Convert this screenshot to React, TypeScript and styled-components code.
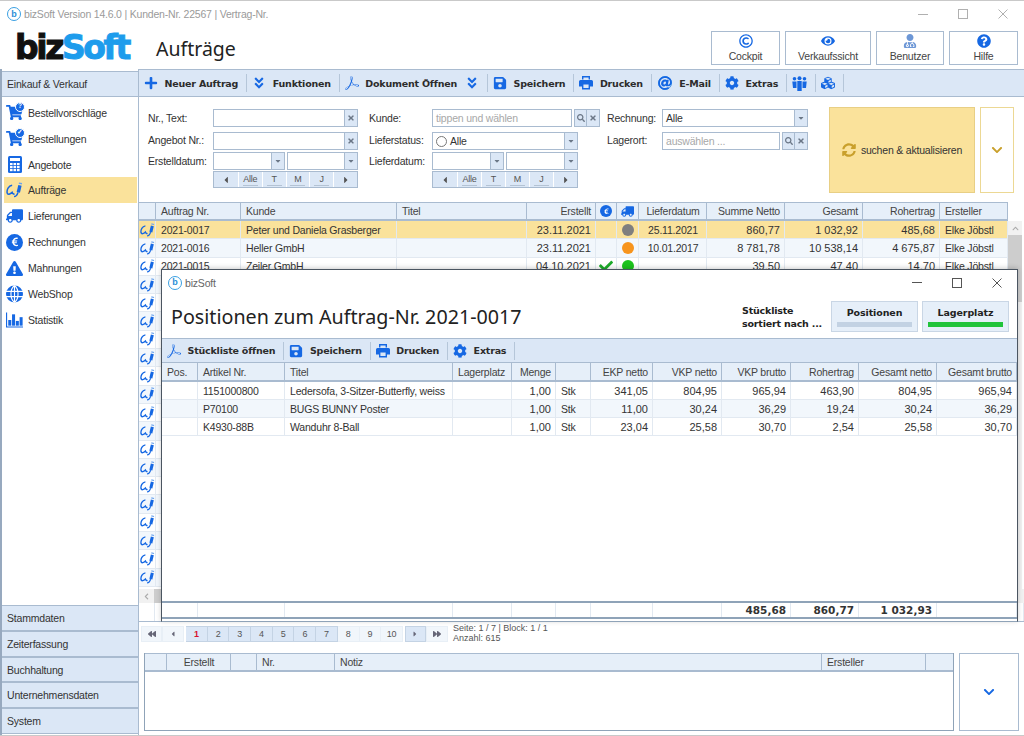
import { FC, ReactNode } from "react";
import styled, { createGlobalStyle } from "styled-components";
import {
	FaPlus, FaAngleDoubleDown, FaSave, FaCog, FaCubes, FaRegCopyright, FaEye, FaUserMd,
	FaQuestionCircle, FaShoppingCart, FaTruck, FaEuroSign, FaExclamationTriangle,
	FaSyncAlt, FaChevronDown, FaSearch, FaCheck, FaCaretLeft, FaCaretRight, FaCaretDown, FaTimes,
	FaBackward, FaForward, FaChevronUp, FaChevronLeft, FaAt
} from "react-icons/fa";
import { SiAdobeacrobatreader } from "react-icons/si";

const BLUE = "#1668e3";
const LINE = "#a9bbd0";
const PANEL = "#dbe7f6";
const HEAD = "#e6eff9";
const YELLOW = "#fae29b";
const TEXT = "#333";
const BOLD_FONT = '"DejaVu Sans", sans-serif';

const GlobalStyle = createGlobalStyle`
	html, body {
		margin: 0;
		padding: 0;
		background: #fff;
	}
	body {
		font-family: "Liberation Sans", "Noto Sans", sans-serif;
		font-size: 10.5px;
		letter-spacing: -0.2px;
		color: ${TEXT};
	}
	* {
		box-sizing: border-box;
	}
`;

const Page = styled.div`
	position: relative;
	display: flex;
	flex-direction: column;
	width: 1024px;
	height: 736px;
	overflow: hidden;
	background: #fff;
	border-top: 1px solid #c9c9c9;
	border-bottom: 1px solid #c9c9c9;
`;

const TitleBar = styled.div`
	display: flex;
	align-items: center;
	height: 26px;
	flex: none;
	padding-left: 7px;
	column-gap: 3px;
	color: #9a9a9a;
`;

const TitleText = styled.span`
	flex: 1;
`;

const AppMark = styled.span`
	display: inline-flex;
	align-items: center;
	justify-content: center;
	width: 14px;
	height: 14px;
	border: 1.5px solid #3a9fe2;
	border-radius: 50%;
	color: #2b8fd8;
	font-size: 9px;
	font-weight: 700;
	line-height: 1;
`;

const WindowButtons = styled.div<{ $tone?: "dim" | "dark" }>`
	display: flex;
	align-items: center;
	column-gap: 30px;
	padding-right: ${p => (p.$tone === "dark" ? 15 : 16)}px;
	span {
		border-color: ${p => (p.$tone === "dark" ? "#555" : "#b0b0b0")};
	}
`;

const Minimize = styled.span`
	display: block;
	width: 10px;
	border-top: 1px solid;
`;

const Maximize = styled.span`
	display: block;
	width: 10px;
	height: 10px;
	border: 1px solid;
`;

const CloseX: FC<{ color?: string }> = ({ color = "#b0b0b0" }) => (
	<svg width="10" height="10" viewBox="0 0 10 10">
		<path d="M0.5 0.5 L9.5 9.5 M9.5 0.5 L0.5 9.5" stroke={color} strokeWidth="1" fill="none" />
	</svg>
);

const Header = styled.div`
	display: flex;
	align-items: center;
	flex: none;
	height: 42px;
	padding: 4px 6px 4px 15px;
`;

const Logo = styled.div`
	width: 141px;
	font-family: ${BOLD_FONT};
	font-size: 33px;
	font-weight: 700;
	letter-spacing: -2.4px;
	line-height: 34px;
	color: #111;
	-webkit-text-stroke: 1px currentColor;
`;

const LogoSoft = styled.span`
	color: #1d9cec;
`;

const PageTitle = styled.h1`
	flex: 1;
	margin: 0;
	font-family: "Noto Sans", sans-serif;
	font-size: 19.5px;
	font-weight: 400;
	letter-spacing: 0;
	color: #222;
`;

const TopButtons = styled.div`
	display: flex;
	column-gap: 5px;
`;

const TopButton = styled.button<{ $w: number }>`
	display: flex;
	flex-direction: column;
	align-items: center;
	justify-content: center;
	row-gap: 2px;
	width: ${p => p.$w}px;
	height: 34px;
	padding: 0;
	background: #fff;
	border: 1px solid ${LINE};
	color: #444;
	font-family: inherit;
	font-size: inherit;
	letter-spacing: inherit;
	line-height: 12px;
	svg {
		color: ${BLUE};
		font-size: 14px;
	}
`;

const UserIcon = styled(FaUserMd)`
	&& {
		color: #6d97d6;
	}
`;

const Body = styled.div`
	display: flex;
	flex: 1;
	min-height: 0;
`;

const Sidebar = styled.nav`
	display: flex;
	flex-direction: column;
	flex: none;
	width: 139px;
	padding: 2px 0 1px;
	border-left: 2px solid #97a9bf;
	border-right: 1px solid ${LINE};
`;

const SectionTab = styled.div`
	display: flex;
	align-items: center;
	flex: none;
	height: 25.8px;
	padding-left: 5px;
	background: ${PANEL};
	border-top: 1px solid ${LINE};
	border-bottom: 1px solid ${LINE};
	color: #333;
`;

const NavList = styled.div`
	display: flex;
	flex-direction: column;
	flex: 1;
	padding: 3px 1px 0 2px;
`;

const NavItem = styled.div<{ $active?: boolean }>`
	display: flex;
	align-items: center;
	height: 25.9px;
	column-gap: 5px;
	padding-left: 2px;
	background: ${p => (p.$active ? YELLOW : "transparent")};
	color: #333;
`;

const NavIcon = styled.span`
	position: relative;
	display: flex;
	align-items: center;
	justify-content: center;
	flex: none;
	width: 17px;
	height: 18px;
	color: ${BLUE};
	font-size: 17px;
`;

const CartBadge = styled.span`
	position: absolute;
	top: -2px;
	right: -2px;
	display: flex;
	align-items: center;
	justify-content: center;
	width: 10px;
	height: 10px;
	border-radius: 50%;
	background: ${BLUE};
	border: 1px solid #fff;
	color: #fff;
	font-size: 6.5px;
	font-weight: 700;
	line-height: 1;
`;

const Disc = styled.span<{ $size?: number }>`
	display: flex;
	align-items: center;
	justify-content: center;
	width: ${p => p.$size ?? 17}px;
	height: ${p => p.$size ?? 17}px;
	border-radius: 50%;
	background: ${BLUE};
	color: #fff;
	font-size: ${p => ((p.$size ?? 17) * 0.58)}px;
`;

const AtRing = styled.span`
	display: flex;
	align-items: center;
	justify-content: center;
	flex: none;
	width: 14px;
	height: 14px;
	margin: 0 1px;
	border: 1.5px solid #3b8fe8;
	border-radius: 50%;
	svg {
		color: #3b8fe8;
		font-size: 8px;
	}
`;

const Main = styled.main`
	display: flex;
	flex-direction: column;
	flex: 1;
	min-width: 0;
`;

const Toolbar = styled.div<{ $h: number }>`
	display: flex;
	align-items: center;
	flex: none;
	height: ${p => p.$h}px;
	padding-left: 5px;
	background: ${PANEL};
	border-top: 1px solid ${LINE};
	border-bottom: 1px solid ${LINE};
`;

const Tool = styled.div`
	display: flex;
	align-items: center;
	column-gap: 6.5px;
	height: 100%;
	padding-right: 8px;
	font-family: ${BOLD_FONT};
	font-size: 9.5px;
	font-weight: 700;
	letter-spacing: -0.2px;
	white-space: nowrap;
	color: #2c2c2c;
	svg {
		flex: none;
		color: ${BLUE};
		font-size: 14px;
	}
`;

const ToolSep = styled.span`
	flex: none;
	width: 1px;
	height: 18px;
	margin-right: 5px;
	background: #b5c6d9;
`;

const FilterPanel = styled.section`
	display: flex;
	flex: none;
	height: 105px;
	padding: 10px 9px 0 9px;
`;

const FieldGroup = styled.div<{ $label: number; $w: number; $gap: number }>`
	display: grid;
	grid-template-columns: ${p => p.$label}px ${p => p.$w}px;
	grid-auto-rows: min-content;
	row-gap: 2px;
	align-items: center;
	margin-right: ${p => p.$gap}px;
	padding-top: 2px;
`;

const Label = styled.span`
	grid-column: 1;
	color: #333;
`;

const FieldRow = styled.div<{ $w?: number; $top?: number }>`
	grid-column: 2;
	display: flex;
	column-gap: 2px;
	width: ${p => (p.$w ? `${p.$w}px` : "auto")};
	height: 18px;
	margin-top: ${p => p.$top ?? 0}px;
`;

const Input = styled.div<{ $ghost?: boolean }>`
	display: flex;
	align-items: center;
	flex: 1;
	min-width: 0;
	padding-left: 3px;
	column-gap: 3px;
	background: #fff;
	border: 1px solid ${LINE};
	color: ${p => (p.$ghost ? "#a8a8a8" : TEXT)};
`;

const Joined = styled.div<{ $fixed?: boolean }>`
	display: flex;
	flex: ${p => (p.$fixed ? "none" : "1")};
	min-width: 0;
`;

const SquareButton = styled.span<{ $first?: boolean }>`
	display: flex;
	align-items: center;
	justify-content: center;
	flex: none;
	width: 13px;
	background: ${PANEL};
	border: 1px solid ${LINE};
	border-left: ${p => (p.$first ? `1px solid ${LINE}` : "none")};
	color: #6b7787;
	font-size: 8px;
`;

const Radio = styled.span`
	width: 11px;
	height: 11px;
	border: 1px solid #777;
	border-radius: 50%;
`;

const DateNav = styled.div<{ $w?: number }>`
	grid-column: 2;
	display: grid;
	grid-template-columns: repeat(6, 1fr);
	width: ${p => (p.$w ? `${p.$w}px` : "auto")};
	height: 17px;
	margin-top: -1px;
	background: ${PANEL};
	border: 1px solid ${LINE};
`;

const DateNavCell = styled.span`
	display: flex;
	flex-direction: column;
	align-items: center;
	justify-content: center;
	border-left: 1px solid #fff;
	color: #555;
	font-size: 9px;
	line-height: 10px;
	&:first-child {
		border-left: none;
	}
	svg {
		font-size: 10px;
		color: #555;
	}
`;

const NavUnderline = styled.span`
	width: 15px;
	height: 1px;
	margin-top: 1px;
	background: #b4c3d4;
`;

const SearchButton = styled.div`
	display: flex;
	align-items: center;
	justify-content: center;
	column-gap: 5px;
	flex: none;
	width: 146px;
	height: 86px;
	background: ${YELLOW};
	border: 1px solid #e8cf85;
	color: #333;
	svg {
		color: #c9a02c;
		font-size: 14px;
	}
`;

const ExpandButton = styled.div<{ $tone: "gold" | "blue" }>`
	display: flex;
	align-items: center;
	justify-content: center;
	flex: none;
	background: #fff;
	border: 1px solid ${p => (p.$tone === "gold" ? "#ecd894" : LINE)};
	color: ${p => (p.$tone === "gold" ? "#c9a02c" : BLUE)};
	font-size: 12px;
`;

const GoldExpand = styled(ExpandButton)`
	width: 34px;
	height: 86px;
	margin-left: 5px;
`;

const BlueExpand = styled(ExpandButton)`
	width: 60px;
	height: 78px;
	margin-left: 5px;
`;

const OrderGrid = styled.section`
	display: flex;
	flex-direction: column;
	flex: none;
	height: 420px;
	border-bottom: 1px solid ${LINE};
`;

const GridMiddle = styled.div`
	display: flex;
	flex: 1;
	min-height: 0;
`;

const GridColumn = styled.div`
	display: flex;
	flex-direction: column;
	width: 869px;
	flex: none;
	overflow: hidden;
`;

const Row = styled.div<{ $cols: string; $tone?: "sel" | "alt" | "plain"; $h?: number }>`
	display: grid;
	grid-template-columns: ${p => p.$cols};
	flex: none;
	height: ${p => p.$h ?? 18}px;
	background: ${p => (p.$tone === "sel" ? YELLOW : p.$tone === "alt" ? "#f2f7fc" : "#fff")};
	border-bottom: 1px solid #e2e9f1;
`;

const HeadRow = styled(Row)<{ $noTop?: boolean }>`
	background: ${HEAD};
	border-top: ${p => (p.$noTop ? "none" : `1px solid ${LINE}`)};
	border-bottom: 2px solid ${LINE};
`;

const FootRow = styled(Row)`
	margin-bottom: 2px;
	border-top: 2px solid #8fa3b8;
	border-bottom: 2px solid #8fa3b8;
`;

const Cell = styled.div<{ $right?: boolean; $center?: boolean; $bold?: boolean; $head?: boolean; $flush?: boolean; $noLine?: boolean }>`
	display: flex;
	align-items: center;
	justify-content: ${p => (p.$right ? "flex-end" : p.$center ? "center" : "flex-start")};
	min-width: 0;
	padding: ${p => (p.$flush ? "0" : "0 4px 0 5px")};
	border-right: ${p => (p.$noLine ? "none" : `1px solid ${p.$head ? LINE : "#e2e9f1"}`)};
	color: ${p => (p.$head ? "#444" : TEXT)};
	font-family: ${p => (p.$bold ? BOLD_FONT : "inherit")};
	font-size: ${p => (p.$right && !p.$head && !p.$bold ? "11px" : "inherit")};
	font-weight: ${p => (p.$bold ? 700 : 400)};
	letter-spacing: ${p => (p.$right && !p.$head ? "0" : "inherit")};
	white-space: nowrap;
	overflow: hidden;
`;

const CheckMark = styled(FaCheck)`
	color: #1dab2a;
	font-size: 14px;
`;

const TruckIcon = styled(FaTruck)<{ $size: number }>`
	color: ${BLUE};
	font-size: ${p => p.$size}px;
	transform: scaleX(-1);
`;

const Dot = styled.span<{ $c: string }>`
	width: 12px;
	height: 12px;
	border-radius: 50%;
	background: ${p => p.$c};
`;

const VScroll = styled.div`
	display: flex;
	flex-direction: column;
	align-items: center;
	width: 14px;
	margin-top: 19px;
	background: #f1f1f1;
	color: #aaa;
	font-size: 7px;
`;

const ScrollArrow = styled.span`
	display: flex;
	align-items: center;
	justify-content: center;
	width: 100%;
	height: 14px;
	flex: none;
	background: #f1f1f1;
`;

const VThumb = styled.span`
	width: 100%;
	height: 67px;
	background: #cdcdcd;
`;

const HScroll = styled.div`
	display: flex;
	flex: none;
	height: 14px;
	background: #f1f1f1;
	color: #aaa;
	font-size: 7px;
`;

const HArrow = styled.span`
	display: flex;
	align-items: center;
	justify-content: center;
	width: 15px;
`;

const HThumb = styled.span`
	width: 60px;
	background: #cdcdcd;
`;

const SumStrip = styled.div`
	display: grid;
	grid-template-columns: 16px 1fr;
	flex: none;
	height: 18px;
	div {
		border-right: 1px solid #e2e9f1;
	}
`;

const PagerZone = styled.div`
	display: flex;
	align-items: center;
	flex: none;
	height: 31px;
	padding: 0 0 8px 2px;
`;

const PagerGroup = styled.div`
	display: flex;
	margin-right: 2px;
`;

const PageCell = styled.span<{ $on?: boolean; $w?: number; $red?: boolean }>`
	display: flex;
	align-items: center;
	justify-content: center;
	width: ${p => p.$w ?? 21.7}px;
	height: 16px;
	background: ${p => (p.$on ? PANEL : "#f1f6fb")};
	border: 1px solid ${p => (p.$on ? "#c4d3e4" : "#e8eff6")};
	border-left-width: ${p => (p.$w ? 1 : 0)}px;
	color: ${p => (p.$red ? "#d8112f" : "#555")};
	font-size: 9px;
	font-weight: ${p => (p.$red ? 700 : 400)};
	svg {
		font-size: 8px;
		color: #667;
	}
`;

const PagerInfo = styled.div`
	margin-left: 3px;
	color: #555;
	font-size: 9px;
	letter-spacing: 0;
	line-height: 9.5px;
`;

const NotesZone = styled.div`
	display: flex;
	flex: none;
	height: 78px;
	padding-left: 5px;
`;

const NotesGrid = styled.div`
	display: flex;
	flex-direction: column;
	width: 810px;
	border: 1px solid #8fa3b8;
	border-top: none;
`;

const Modal = styled.div`
	position: absolute;
	left: 161px;
	top: 268px;
	display: flex;
	flex-direction: column;
	width: 857px;
	height: 353px;
	background: #fff;
	border: 1px solid #4b5561;
	border-bottom-color: #8fa3b8;
	box-shadow: 0 -1px 5px rgba(0, 0, 0, 0.2);
`;

const ModalBar = styled.div`
	display: flex;
	align-items: center;
	flex: none;
	height: 25px;
	padding-left: 6px;
	column-gap: 3px;
	color: #666;
`;

const ModalHead = styled.div`
	display: flex;
	align-items: center;
	flex: none;
	height: 43px;
	padding: 0 8px 0 9px;
`;

const ModalTitle = styled.h2`
	flex: 1;
	margin: 0;
	font-family: "Noto Sans", sans-serif;
	font-size: 19.7px;
	font-weight: 400;
	letter-spacing: 0;
	color: #222;
	white-space: nowrap;
`;

const SortLabel = styled.div`
	margin-right: 5px;
	font-family: ${BOLD_FONT};
	font-size: 9.5px;
	font-weight: 700;
	letter-spacing: -0.2px;
	line-height: 13px;
	color: #222;
`;

const SortButton = styled.div`
	display: flex;
	flex-direction: column;
	align-items: center;
	justify-content: flex-end;
	row-gap: 4px;
	width: 87px;
	height: 31px;
	margin-left: 4px;
	padding: 0 5px 4px;
	background: ${HEAD};
	border: 1px solid #c9d6e5;
	font-family: ${BOLD_FONT};
	font-size: 9.5px;
	font-weight: 700;
	letter-spacing: -0.1px;
	color: #222;
`;

const SortBar = styled.span<{ $on?: boolean }>`
	width: 100%;
	height: 5px;
	background: ${p => (p.$on ? "#21c43a" : "#c3d2e3")};
`;

const ModalTable = styled.div`
	display: flex;
	flex-direction: column;
	flex: 1;
	min-height: 0;
`;

const Spacer = styled.div`
	flex: 1;
`;

const RowIcon = styled.span`
	display: flex;
	align-items: center;
	justify-content: center;
	width: 100%;
	svg {
		width: 15px;
		height: 14px;
	}
`;

const PenIcon: FC = () => (
	<svg width="18" height="16" viewBox="0 0 18 16" fill="none">
		<path d="M6.5 3 C2.5 3.5 0.7 8 1.2 11 C1.7 13.5 4.5 12.5 6.5 10.5 C7 12 8 12.5 9 12" stroke={BLUE} strokeWidth="1.6" />
		<path d="M13 10.5 L14.8 3" stroke={BLUE} strokeWidth="3.6" />
		<path d="M15.1 1.7 L15.4 0.3" stroke="#6aa3ee" strokeWidth="3.4" />
		<path d="M8.5 15 C11 15 12 13 12.7 10.5" stroke={BLUE} strokeWidth="1.6" />
	</svg>
);

const CalcIcon: FC = () => (
	<svg width="14" height="17" viewBox="0 0 14 17">
		<rect width="14" height="17" rx="1.5" fill={BLUE} />
		<rect x="2" y="2" width="10" height="3" fill="#fff" />
		{[2, 5.5, 9].flatMap(x => [7, 10, 13].map(y => (
			<rect key={`${x}-${y}`} x={x} y={y} width="2.6" height="2.2" fill="#fff" />
		)))}
	</svg>
);

const GlobeIcon: FC = () => (
	<svg width="18" height="18" viewBox="0 0 18 18">
		<circle cx="9" cy="9" r="9" fill={BLUE} />
		<path d="M0 6.2 H18 M0 11.8 H18 M9 0 V18 M9 0 C4 4 4 14 9 18 M9 0 C14 4 14 14 9 18" stroke="#fff" strokeWidth="1.2" fill="none" />
	</svg>
);

const BarsIcon: FC = () => (
	<svg width="18" height="16" viewBox="0 0 18 16" fill={BLUE}>
		<path d="M0 0 H1.2 V14.8 H18 V16 H0 Z" />
		<rect x="2.4" y="8" width="3.2" height="6" />
		<rect x="6.4" y="2" width="3.2" height="12" />
		<rect x="10.4" y="9" width="3.2" height="5" />
		<rect x="14.4" y="5" width="3.2" height="9" />
	</svg>
);

const PrinterIcon: FC = () => (
	<svg width="14" height="14" viewBox="0 0 14 14" fill={BLUE}>
		<path d="M3 0 H11 V3.5 H9.6 V1.4 H4.4 V3.5 H3 Z" />
		<path fillRule="evenodd" d="M1.5 4 H12.5 A1.5 1.5 0 0 1 14 5.5 V10.5 H11 V13.5 H3 V10.5 H0 V5.5 A1.5 1.5 0 0 1 1.5 4 Z M4.4 8.5 V12.1 H9.6 V8.5 Z" />
	</svg>
);

const PeopleIcon: FC = () => (
	<svg width="15" height="15" viewBox="0 0 15 15" fill={BLUE}>
		<circle cx="2.5" cy="2.8" r="1.8" />
		<circle cx="7.5" cy="2.2" r="2" />
		<circle cx="12.5" cy="2.8" r="1.8" />
		<path d="M0.3 5.5 H4.5 V12 H1 Z M5.3 5 H9.7 V15 H5.3 Z M10.5 5.5 H14.7 L14 12 H10.5 Z" />
	</svg>
);

const AcrobatIcon = () => <SiAdobeacrobatreader />;

const ORDER_COLS = "17px 85px 156px 130px 69px 21px 22px 68px 78px 78px 77px 68px";
const POS_COLS = "36px 87px 168px 59px 44px 35px 62px 69px 69px 68px 78px 1fr";
const NOTE_COLS = "22px 64px 26px 78px 487px 104px 1fr";

const orders = [
	{ nr: "2021-0017", kunde: "Peter und Daniela Grasberger", date: "23.11.2021", check: false, dot: "#7f7f7f", liefer: "25.11.2021", netto: "860,77", gesamt: "1 032,92", roh: "485,68" },
	{ nr: "2021-0016", kunde: "Heller GmbH", date: "23.11.2021", check: false, dot: "#f7941d", liefer: "10.01.2017", netto: "8 781,78", gesamt: "10 538,14", roh: "4 675,87" },
	{ nr: "2021-0015", kunde: "Zeiler GmbH", date: "04.10.2021", check: true, dot: "#1dc31d", liefer: "", netto: "39,50", gesamt: "47,40", roh: "14,70" }
];

const positions = [
	["1151000800", "Ledersofa, 3-Sitzer-Butterfly, weiss", "341,05", "804,95", "965,94", "463,90", "804,95", "965,94"],
	["P70100", "BUGS BUNNY Poster", "11,00", "30,24", "36,29", "19,24", "30,24", "36,29"],
	["K4930-88B", "Wanduhr 8-Ball", "23,04", "25,58", "30,70", "2,54", "25,58", "30,70"]
];

const Cart: FC<{ badge: ReactNode }> = ({ badge }) => (
	<NavIcon>
		<FaShoppingCart />
		<CartBadge>{badge}</CartBadge>
	</NavIcon>
);

const navItems: { label: string; icon: ReactNode; active?: boolean }[] = [
	{ label: "Bestellvorschläge", icon: <Cart badge="?" /> },
	{ label: "Bestellungen", icon: <Cart badge="✓" /> },
	{ label: "Angebote", icon: <NavIcon><CalcIcon /></NavIcon> },
	{ label: "Aufträge", icon: <NavIcon><PenIcon /></NavIcon>, active: true },
	{ label: "Lieferungen", icon: <NavIcon><TruckIcon $size={18} /></NavIcon> },
	{ label: "Rechnungen", icon: <NavIcon><Disc><FaEuroSign /></Disc></NavIcon> },
	{ label: "Mahnungen", icon: <NavIcon><FaExclamationTriangle /></NavIcon> },
	{ label: "WebShop", icon: <NavIcon><GlobeIcon /></NavIcon> },
	{ label: "Statistik", icon: <NavIcon><BarsIcon /></NavIcon> }
];

const DateNavigator: FC<{ w?: number }> = ({ w }) => (
	<DateNav $w={w}>
		<DateNavCell><FaCaretLeft /></DateNavCell>
		{["Alle", "T", "M", "J"].map(l => (
			<DateNavCell key={l}>{l}<NavUnderline /></DateNavCell>
		))}
		<DateNavCell><FaCaretRight /></DateNavCell>
	</DateNav>
);

const DateField = () => (
	<Joined>
		<Input />
		<SquareButton><FaCaretDown /></SquareButton>
	</Joined>
);

const ClearField = () => (
	<Joined>
		<Input />
		<SquareButton><FaTimes /></SquareButton>
	</Joined>
);

const PickField: FC<{ text: string }> = ({ text }) => (
	<>
		<Input $ghost>{text}</Input>
		<Joined $fixed>
			<SquareButton $first><FaSearch /></SquareButton>
			<SquareButton><FaTimes /></SquareButton>
		</Joined>
	</>
);

const SelectField: FC<{ children: ReactNode }> = ({ children }) => (
	<Joined>
		<Input>{children}</Input>
		<SquareButton><FaCaretDown /></SquareButton>
	</Joined>
);

export default function App() {
	const blankRows = Array.from({ length: 17 }, (_, i) => i);

	return (
		<>
			<GlobalStyle />
			<Page>
				<TitleBar>
					<AppMark>b</AppMark>
					<TitleText>bizSoft Version 14.6.0 | Kunden-Nr. 22567 | Vertrag-Nr.</TitleText>
					<WindowButtons>
						<Minimize />
						<Maximize />
						<CloseX />
					</WindowButtons>
				</TitleBar>

				<Header>
					<Logo>biz<LogoSoft>Soft</LogoSoft></Logo>
					<PageTitle>Aufträge</PageTitle>
					<TopButtons>
						<TopButton $w={69}><FaRegCopyright />Cockpit</TopButton>
						<TopButton $w={86}><FaEye />Verkaufssicht</TopButton>
						<TopButton $w={68}><UserIcon />Benutzer</TopButton>
						<TopButton $w={69}><FaQuestionCircle />Hilfe</TopButton>
					</TopButtons>
				</Header>

				<Body>
					<Sidebar>
						<SectionTab>Einkauf &amp; Verkauf</SectionTab>
						<NavList>
							{navItems.map(n => (
								<NavItem key={n.label} $active={n.active}>
									{n.icon}
									<span>{n.label}</span>
								</NavItem>
							))}
						</NavList>
						{["Stammdaten", "Zeiterfassung", "Buchhaltung", "Unternehmensdaten", "System"].map(t => (
							<SectionTab key={t}>{t}</SectionTab>
						))}
					</Sidebar>

					<Main>
						<Toolbar $h={28}>
							<Tool><FaPlus />Neuer Auftrag</Tool>
							<ToolSep />
							<Tool><FaAngleDoubleDown />Funktionen</Tool>
							<ToolSep />
							<Tool><AcrobatIcon />Dokument Öffnen</Tool>
							<Tool><FaAngleDoubleDown /></Tool>
							<ToolSep />
							<Tool><FaSave />Speichern</Tool>
							<ToolSep />
							<Tool><PrinterIcon />Drucken</Tool>
							<ToolSep />
							<Tool><AtRing><FaAt /></AtRing>E-Mail</Tool>
							<ToolSep />
							<Tool><FaCog />Extras</Tool>
							<ToolSep />
							<Tool><PeopleIcon /></Tool>
							<ToolSep />
							<Tool><FaCubes /></Tool>
							<ToolSep />
						</Toolbar>

						<FilterPanel>
							<FieldGroup $label={65} $w={145} $gap={11}>
								<Label>Nr., Text:</Label>
								<FieldRow><ClearField /></FieldRow>
								<Label>Angebot Nr.:</Label>
								<FieldRow $top={3}><ClearField /></FieldRow>
								<Label>Erstelldatum:</Label>
								<FieldRow><DateField /><DateField /></FieldRow>
								<DateNavigator />
							</FieldGroup>

							<FieldGroup $label={63} $w={168} $gap={7}>
								<Label>Kunde:</Label>
								<FieldRow><PickField text="tippen und wählen" /></FieldRow>
								<Label>Lieferstatus:</Label>
								<FieldRow $w={146} $top={3}><SelectField><Radio />Alle</SelectField></FieldRow>
								<Label>Lieferdatum:</Label>
								<FieldRow $w={146}><DateField /><DateField /></FieldRow>
								<DateNavigator w={146} />
							</FieldGroup>

							<FieldGroup $label={55} $w={146} $gap={21}>
								<Label>Rechnung:</Label>
								<FieldRow><SelectField>Alle</SelectField></FieldRow>
								<Label>Lagerort:</Label>
								<FieldRow $top={3}><PickField text="auswählen ..." /></FieldRow>
							</FieldGroup>

							<SearchButton><FaSyncAlt />suchen &amp; aktualisieren</SearchButton>
							<GoldExpand $tone="gold"><FaChevronDown /></GoldExpand>
						</FilterPanel>

						<OrderGrid>
							<GridMiddle>
								<GridColumn>
									<HeadRow $cols={ORDER_COLS} $h={19}>
										<Cell $head />
										<Cell $head>Auftrag Nr.</Cell>
										<Cell $head>Kunde</Cell>
										<Cell $head>Titel</Cell>
										<Cell $head $right>Erstellt</Cell>
										<Cell $head $center $flush><Disc $size={12}><FaEuroSign /></Disc></Cell>
										<Cell $head $center $flush><TruckIcon $size={13} /></Cell>
										<Cell $head $center>Lieferdatum</Cell>
										<Cell $head $right>Summe Netto</Cell>
										<Cell $head $right>Gesamt</Cell>
										<Cell $head $right>Rohertrag</Cell>
										<Cell $head>Ersteller</Cell>
									</HeadRow>
									{orders.map((o, i) => (
										<Row key={o.nr} $cols={ORDER_COLS} $tone={i === 0 ? "sel" : i % 2 ? "alt" : "plain"} $h={18.3}>
											<Cell $flush><RowIcon><PenIcon /></RowIcon></Cell>
											<Cell>{o.nr}</Cell>
											<Cell>{o.kunde}</Cell>
											<Cell />
											<Cell $right>{o.date}</Cell>
											<Cell $center $flush>{o.check && <CheckMark />}</Cell>
											<Cell $center $flush><Dot $c={o.dot} /></Cell>
											<Cell $center>{o.liefer}</Cell>
											<Cell $right>{o.netto}</Cell>
											<Cell $right>{o.gesamt}</Cell>
											<Cell $right>{o.roh}</Cell>
											<Cell>Elke Jöbstl</Cell>
										</Row>
									))}
									{blankRows.map(i => (
										<Row key={i} $cols={ORDER_COLS} $tone={i % 2 ? "plain" : "alt"} $h={18.3}>
											<Cell $flush><RowIcon><PenIcon /></RowIcon></Cell>
										</Row>
									))}
								</GridColumn>
								<VScroll>
									<ScrollArrow><FaChevronUp /></ScrollArrow>
									<VThumb />
								</VScroll>
							</GridMiddle>
							<HScroll>
								<HArrow><FaChevronLeft /></HArrow>
								<HThumb />
							</HScroll>
							<SumStrip><div /><div /></SumStrip>
						</OrderGrid>

						<PagerZone>
							<PagerGroup>
								<PageCell $w={21}><FaBackward /></PageCell>
								<PageCell $w={22}><FaCaretLeft /></PageCell>
							</PagerGroup>
							<PagerGroup>
								{[1, 2, 3, 4, 5, 6, 7, 8, 9, 10].map(n => (
									<PageCell key={n} $on={n < 8} $red={n === 1}>{n}</PageCell>
								))}
							</PagerGroup>
							<PagerGroup>
								<PageCell $w={21} $on><FaCaretRight /></PageCell>
								<PageCell $w={22}><FaForward /></PageCell>
							</PagerGroup>
							<PagerInfo>Seite: 1 / 7 | Block: 1 / 1<br />Anzahl: 615</PagerInfo>
						</PagerZone>

						<NotesZone>
							<NotesGrid>
								<HeadRow $cols={NOTE_COLS} $h={19}>
									<Cell $head />
									<Cell $head $center>Erstellt</Cell>
									<Cell $head />
									<Cell $head>Nr.</Cell>
									<Cell $head>Notiz</Cell>
									<Cell $head>Ersteller</Cell>
									<Cell $noLine />
								</HeadRow>
							</NotesGrid>
							<BlueExpand $tone="blue"><FaChevronDown /></BlueExpand>
						</NotesZone>
					</Main>
				</Body>

				<Modal>
					<ModalBar>
						<AppMark>b</AppMark>
						<TitleText>bizSoft</TitleText>
						<WindowButtons $tone="dark">
							<Minimize />
							<Maximize />
							<CloseX color="#555" />
						</WindowButtons>
					</ModalBar>
					<ModalHead>
						<ModalTitle>Positionen zum Auftrag-Nr. 2021-0017</ModalTitle>
						<SortLabel>Stückliste<br />sortiert nach ...</SortLabel>
						<SortButton>Positionen<SortBar /></SortButton>
						<SortButton>Lagerplatz<SortBar $on /></SortButton>
					</ModalHead>
					<Toolbar $h={25}>
						<Tool><AcrobatIcon />Stückliste öffnen</Tool>
						<ToolSep />
						<Tool><FaSave />Speichern</Tool>
						<ToolSep />
						<Tool><PrinterIcon />Drucken</Tool>
						<ToolSep />
						<Tool><FaCog />Extras</Tool>
						<ToolSep />
					</Toolbar>
					<ModalTable>
						<HeadRow $cols={POS_COLS} $h={19} $noTop>
							<Cell $head>Pos.</Cell>
							<Cell $head>Artikel Nr.</Cell>
							<Cell $head>Titel</Cell>
							<Cell $head>Lagerplatz</Cell>
							<Cell $head $right>Menge</Cell>
							<Cell $head />
							<Cell $head $right>EKP netto</Cell>
							<Cell $head $right>VKP netto</Cell>
							<Cell $head $right>VKP brutto</Cell>
							<Cell $head $right>Rohertrag</Cell>
							<Cell $head $right>Gesamt netto</Cell>
							<Cell $head $right>Gesamt brutto</Cell>
						</HeadRow>
						{positions.map((p, i) => (
							<Row key={p[0]} $cols={POS_COLS} $tone={i === 1 ? "alt" : "plain"}>
								<Cell />
								<Cell>{p[0]}</Cell>
								<Cell>{p[1]}</Cell>
								<Cell />
								<Cell $right>1,00</Cell>
								<Cell>Stk</Cell>
								{p.slice(2).map((v, j) => <Cell key={j} $right>{v}</Cell>)}
							</Row>
						))}
						<Spacer />
						<FootRow $cols={POS_COLS}>
							<Cell /><Cell /><Cell /><Cell /><Cell /><Cell /><Cell /><Cell />
							<Cell $right $bold>485,68</Cell>
							<Cell $right $bold>860,77</Cell>
							<Cell $right $bold>1 032,93</Cell>
							<Cell />
						</FootRow>
					</ModalTable>
				</Modal>
			</Page>
		</>
	);
}
